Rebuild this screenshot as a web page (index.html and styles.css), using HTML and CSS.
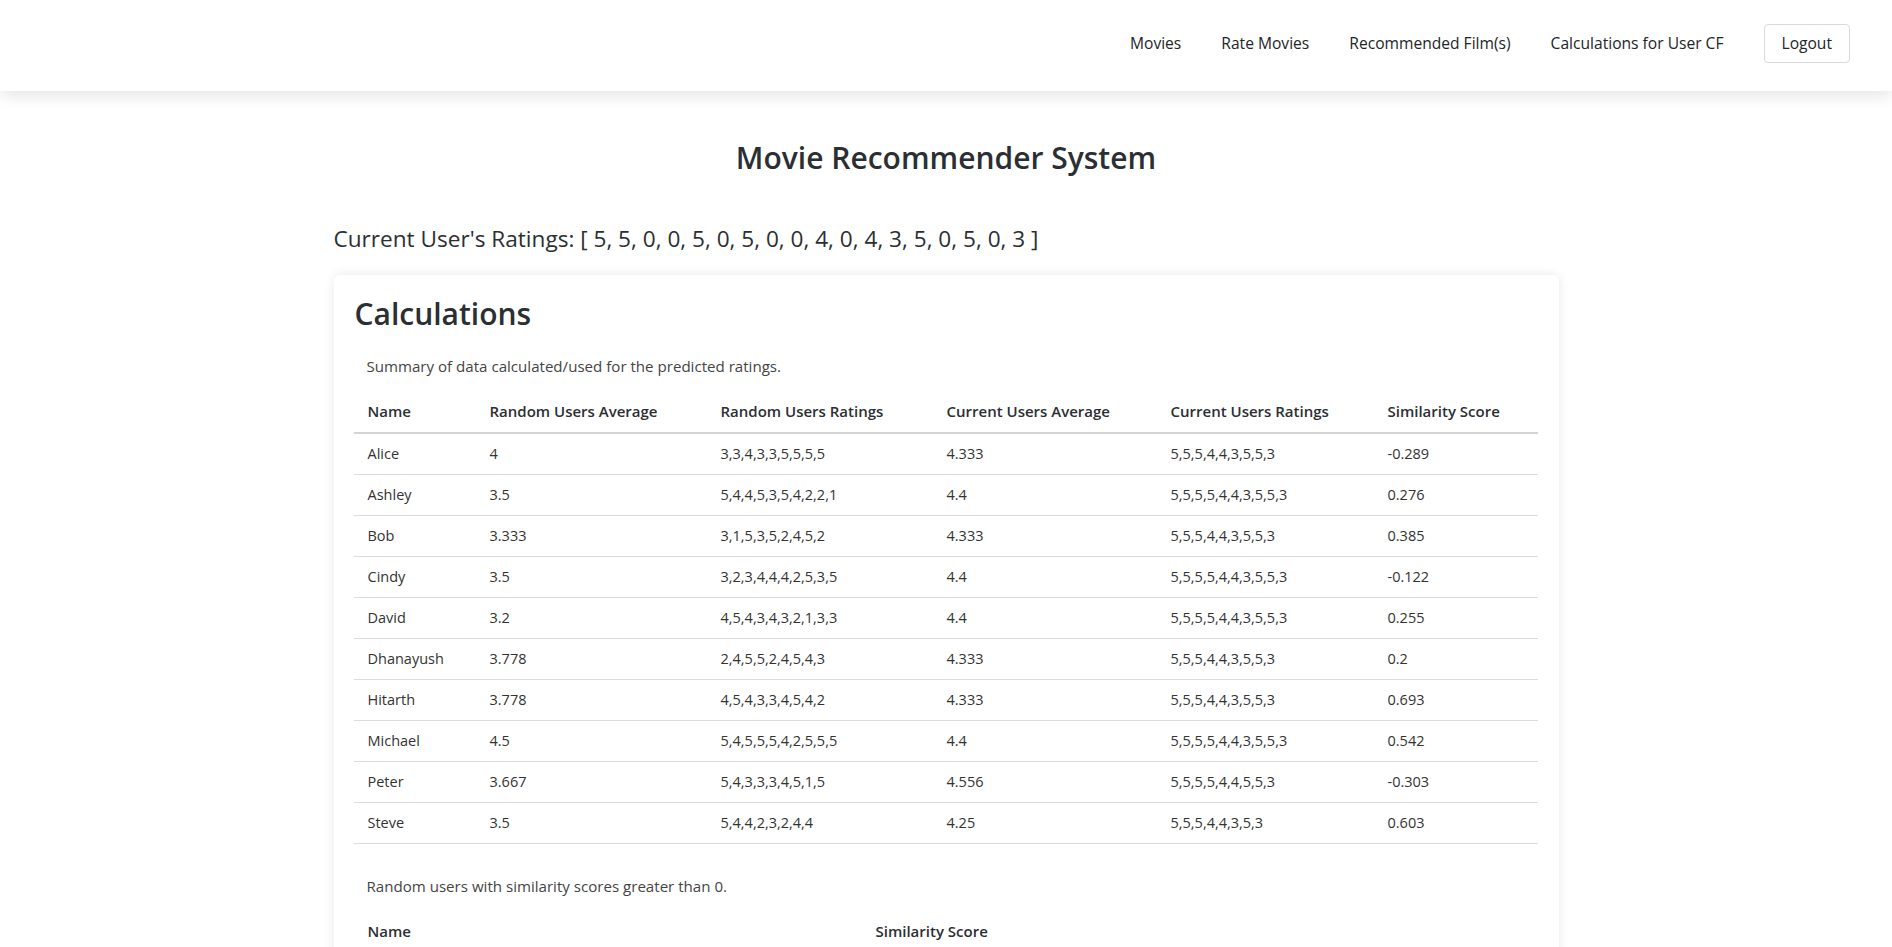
FILE: index.html
```html
<!DOCTYPE html>
<html lang="en">
<head>
<meta charset="utf-8">
<title>Movie Recommender System</title>
<link rel="stylesheet" href="styles.css">
</head>
<body>
<nav class="navbar">
  <a class="nav-link" href="#">Movies</a>
  <a class="nav-link" href="#">Rate Movies</a>
  <a class="nav-link" href="#">Recommended Film(s)</a>
  <a class="nav-link" href="#">Calculations for User CF</a>
  <button class="logout">Logout</button>
</nav>
<main class="container">
  <h1 class="page-title">Movie Recommender System</h1>
  <p class="ratings">Current User's Ratings: [ 5, 5, 0, 0, 5, 0, 5, 0, 0, 4, 0, 4, 3, 5, 0, 5, 0, 3 ]</p>
  <section class="card">
    <h2 class="card-title">Calculations</h2>
    <p class="caption">Summary of data calculated/used for the predicted ratings.</p>
    <table class="data-table">
      <thead>
        <tr><th class="c1">Name</th><th class="c2">Random Users Average</th><th class="c3">Random Users Ratings</th><th class="c4">Current Users Average</th><th class="c5">Current Users Ratings</th><th>Similarity Score</th></tr>
      </thead>
      <tbody>
        <tr><td>Alice</td><td>4</td><td>3,3,4,3,3,5,5,5,5</td><td>4.333</td><td>5,5,5,4,4,3,5,5,3</td><td>-0.289</td></tr>
        <tr><td>Ashley</td><td>3.5</td><td>5,4,4,5,3,5,4,2,2,1</td><td>4.4</td><td>5,5,5,5,4,4,3,5,5,3</td><td>0.276</td></tr>
        <tr><td>Bob</td><td>3.333</td><td>3,1,5,3,5,2,4,5,2</td><td>4.333</td><td>5,5,5,4,4,3,5,5,3</td><td>0.385</td></tr>
        <tr><td>Cindy</td><td>3.5</td><td>3,2,3,4,4,4,2,5,3,5</td><td>4.4</td><td>5,5,5,5,4,4,3,5,5,3</td><td>-0.122</td></tr>
        <tr><td>David</td><td>3.2</td><td>4,5,4,3,4,3,2,1,3,3</td><td>4.4</td><td>5,5,5,5,4,4,3,5,5,3</td><td>0.255</td></tr>
        <tr><td>Dhanayush</td><td>3.778</td><td>2,4,5,5,2,4,5,4,3</td><td>4.333</td><td>5,5,5,4,4,3,5,5,3</td><td>0.2</td></tr>
        <tr><td>Hitarth</td><td>3.778</td><td>4,5,4,3,3,4,5,4,2</td><td>4.333</td><td>5,5,5,4,4,3,5,5,3</td><td>0.693</td></tr>
        <tr><td>Michael</td><td>4.5</td><td>5,4,5,5,5,4,2,5,5,5</td><td>4.4</td><td>5,5,5,5,4,4,3,5,5,3</td><td>0.542</td></tr>
        <tr><td>Peter</td><td>3.667</td><td>5,4,3,3,3,4,5,1,5</td><td>4.556</td><td>5,5,5,5,4,4,5,5,3</td><td>-0.303</td></tr>
        <tr><td>Steve</td><td>3.5</td><td>5,4,4,2,3,2,4,4</td><td>4.25</td><td>5,5,5,4,4,3,5,3</td><td>0.603</td></tr>
      </tbody>
    </table>
    <p class="caption caption-second">Random users with similarity scores greater than 0.</p>
    <table class="data-table">
      <thead>
        <tr><th class="s1">Name</th><th>Similarity Score</th></tr>
      </thead>
      <tbody>
        <tr><td>Ashley</td><td>0.276</td></tr>
        <tr><td>Bob</td><td>0.385</td></tr>
      </tbody>
    </table>
  </section>
</main>
</body>
</html>
```

FILE: styles.css
```css
html, body {
  margin: 0;
  padding: 0;
  background: #ffffff;
  color: #212529;
  font-family: "Open Sans", "Noto Sans", "Liberation Sans", sans-serif;
}

.navbar {
  height: 91px;
  box-sizing: border-box;
  display: flex;
  justify-content: flex-end;
  align-items: center;
  padding: 0 42px 5px 0;
  background: #fff;
  box-shadow: 0 4px 16px rgba(0, 0, 0, 0.11);
  position: relative;
  z-index: 2;
}

.nav-link {
  font-size: 15.6px;
  color: #212529;
  text-decoration: none;
  padding: 0 20px;
}

.logout {
  margin-left: 20px;
  height: 39px;
  padding: 0 17px;
  font-family: inherit;
  font-size: 15.6px;
  color: #212529;
  background: #fff;
  border: 1px solid #d9d9d9;
  border-radius: 4px;
}

.container {
  width: 1225px;
  margin: 0 auto;
}

.page-title {
  margin: 48px 0 0;
  text-align: center;
  font-size: 30px;
  font-weight: 600;
  line-height: 38px;
  color: #2b2f33;
}

.ratings {
  margin: 46px 0 0;
  font-size: 22.6px;
  line-height: 32px;
  font-weight: 400;
  color: #2b2f33;
}

.card {
  margin-top: 20px;
  padding: 19px 21px 20px 20px;
  background: #fff;
  border-radius: 6px;
  box-shadow: 0 0 12px rgba(0, 0, 0, 0.09);
}

.card-title {
  margin: 0;
  padding-left: 1px;
  font-size: 30px;
  font-weight: 600;
  line-height: 40px;
  color: #2b2f33;
}

.caption {
  margin: 21px 0 0;
  padding-left: 13px;
  font-size: 15.1px;
  line-height: 22px;
  color: #444;
}

.caption-second {
  margin-top: 31px;
}

.data-table {
  width: 100%;
  margin-top: 15px;
  border-collapse: collapse;
  font-size: 14.5px;
}

.data-table th,
.data-table td {
  padding: 8px 12px 8px 14px;
  line-height: 24px;
  text-align: left;
}

.data-table thead th {
  padding-top: 7px;
  padding-bottom: 9px;
}

.data-table th {
  font-size: 15px;
  font-weight: 600;
  border-bottom: 2px solid #d4d4d4;
  color: #2b2f33;
}

.data-table td {
  border-bottom: 1px solid #dcdcdc;
  color: #333;
}

.c1 { width: 96px; }
.c2 { width: 205px; }
.c3 { width: 200px; }
.c4 { width: 198px; }
.c5 { width: 191px; }
.s1 { width: 482px; }
```
